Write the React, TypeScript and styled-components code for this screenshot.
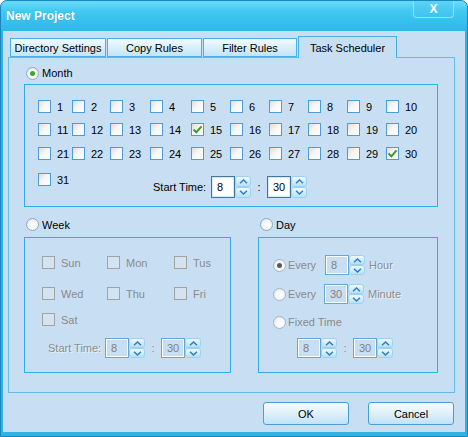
import React from 'react'
import styled, { createGlobalStyle } from 'styled-components'

const GlobalStyle = createGlobalStyle`
  html, body {
    margin: 0;
    padding: 0;
    background: #ffffff;
  }
  body {
    font-family: 'Liberation Sans', Arial, sans-serif;
    font-size: 11px;
    color: #000;
  }
`

const Window = styled.div`
  width: 468px;
  height: 437px;
  box-sizing: border-box;
  display: flex;
  flex-direction: column;
  background: #2fb3e4;
  border: 1px solid #1a86bd;
  border-radius: 7px 7px 0 0;
  overflow: hidden;
`

const TitleBar = styled.div`
  height: 30px;
  flex: none;
  display: flex;
  align-items: flex-start;
  background: linear-gradient(180deg, #6adcf7 0%, #41c8f1 35%, #2db8e8 100%);
`

const Title = styled.div`
  padding-left: 5px;
  line-height: 30px;
  font-size: 12px;
  font-weight: bold;
  color: #ffffff;
  text-shadow: 0 0 1px rgba(0, 90, 140, 0.4);
`

const CloseButton = styled.div`
  margin-left: auto;
  margin-right: 13px;
  margin-top: -1px;
  width: 41px;
  height: 18px;
  box-sizing: border-box;
  border: 1px solid #8fe2f8;
  border-top: none;
  border-radius: 0 0 4px 4px;
  background: linear-gradient(180deg, #5fd3f4 0%, #3dc2ee 100%);
  color: #ffffff;
  font-weight: bold;
  font-size: 12px;
  display: flex;
  align-items: center;
  justify-content: center;
`

const Body = styled.div`
  flex: 1;
  margin: 0 2px 4px 2px;
  background: #c8dff3;
  display: flex;
  flex-direction: column;
  padding: 5px 10px 0 5px;
`

const TabRow = styled.div`
  height: 21px;
  display: flex;
  align-items: flex-end;
  gap: 1px;
  padding-left: 2px;
`

const Tab = styled.div<{ $active?: boolean; $w: number }>`
  width: ${p => p.$w}px;
  height: ${p => (p.$active ? 22 : 19)}px;
  box-sizing: border-box;
  border: 1px solid #4ab1e6;
  border-bottom: ${p => (p.$active ? 'none' : '1px solid #4ab1e6')};
  background: ${p => (p.$active ? '#c8dff3' : 'linear-gradient(180deg, #f3fbff 0%, #d9effb 50%, #c4e4f6 100%)')};
  margin-bottom: ${p => (p.$active ? -1 : 0)}px;
  position: relative;
  z-index: ${p => (p.$active ? 1 : 0)};
  display: flex;
  align-items: center;
  justify-content: center;
  padding-top: ${p => (p.$active ? 1 : 0)}px;
  font-size: 11px;
`

const Panel = styled.div`
  height: 336px;
  box-sizing: border-box;
  border: 1px solid #62bce8;
  padding: 7px 0 0 15px;
  display: flex;
  flex-direction: column;
`

const Header = styled.div<{ $h: number }>`
  height: ${p => p.$h}px;
  display: flex;
  align-items: center;
  gap: 3px;
  padding-left: 2px;
`

const GroupBox = styled.div<{ $w: number; $h: number }>`
  width: ${p => p.$w}px;
  height: ${p => p.$h}px;
  box-sizing: border-box;
  border: 1px solid #36ace6;
`

const MonthBox = styled(GroupBox)`
  margin-top: 3px;
  padding: 15px 0 0 13px;
`

const MonthGrid = styled.div`
  display: grid;
  grid-template-columns: 34px 38px 40px 41px 39px 39px 39px 39px 39px auto;
  grid-template-rows: 23px 24px 26px auto;
  align-items: start;
`

const LowerRow = styled.div`
  display: flex;
  gap: 27px;
  margin-top: 9px;
`

const Column = styled.div`
  display: flex;
  flex-direction: column;
`

const WeekBox = styled(GroupBox)`
  margin-top: 4px;
  padding: 18px 0 0 17px;
`

const WeekGrid = styled.div`
  display: grid;
  grid-template-columns: 65px 67px auto;
  grid-template-rows: 31px 26px auto;
  align-items: start;
`

const DayBox = styled(GroupBox)`
  margin-top: 4px;
  padding: 17px 0 0 14px;
  display: flex;
  flex-direction: column;
`

const CheckItem = styled.label<{ $disabled?: boolean }>`
  display: flex;
  align-items: center;
  gap: 6px;
  height: 13px;
  color: ${p => (p.$disabled ? '#8a8a8a' : '#000')};
  white-space: nowrap;
`

const CheckBox = styled.span<{ $disabled?: boolean }>`
  width: 13px;
  height: 13px;
  box-sizing: border-box;
  flex: none;
  border: 1px solid ${p => (p.$disabled ? '#a2a2a2' : '#4a9dd7')};
  background: ${p =>
    p.$disabled ? '#d4e3f0' : 'linear-gradient(135deg, #dcdcdc 0%, #f6f6f6 45%, #ffffff 100%)'};
  display: flex;
  align-items: center;
  justify-content: center;
`

const RadioCircle = styled.span<{ $disabled?: boolean; $dot?: string }>`
  width: 13px;
  height: 13px;
  flex: none;
  box-sizing: border-box;
  border-radius: 50%;
  border: 1px solid ${p => (p.$disabled ? '#aab4be' : '#8ea8c4')};
  background: radial-gradient(circle at 60% 60%, #ffffff 0%, #f2f4f6 55%, #d6dde5 100%);
  display: flex;
  align-items: center;
  justify-content: center;
  &::after {
    content: '';
    width: 5px;
    height: 5px;
    border-radius: 50%;
    background: ${p => p.$dot ?? 'transparent'};
  }
`

const RadioLabel = styled.span<{ $disabled?: boolean }>`
  color: ${p => (p.$disabled ? '#8a8a8a' : '#000')};
  white-space: nowrap;
`

const TimeRow = styled.div<{ $indent?: number; $top?: number }>`
  display: flex;
  align-items: center;
  margin-left: ${p => p.$indent ?? 0}px;
  margin-top: ${p => p.$top ?? 0}px;
`

const TimeLabel = styled.span<{ $disabled?: boolean; $w?: number }>`
  width: ${p => (p.$w ? `${p.$w}px` : 'auto')};
  color: ${p => (p.$disabled ? '#8c8c8c' : '#000')};
  text-shadow: ${p => (p.$disabled ? '1px 1px 0 rgba(255,255,255,0.6)' : 'none')};
  white-space: nowrap;
`

const Colon = styled.span<{ $disabled?: boolean }>`
  width: 16px;
  text-align: center;
  color: ${p => (p.$disabled ? '#8c8c8c' : '#000')};
`

const NumInput = styled.div<{ $disabled?: boolean; $h: number }>`
  width: 24px;
  height: ${p => p.$h}px;
  box-sizing: border-box;
  border: 1px solid ${p => (p.$disabled ? '#6aa6d2' : '#3f76a3')};
  box-shadow: inset 0 0 0 1px ${p => (p.$disabled ? '#ffffff' : '#d7e9f6')};
  background: ${p => (p.$disabled ? '#c8dff3' : '#ffffff')};
  color: ${p => (p.$disabled ? '#7f7f7f' : '#000')};
  padding-left: 5px;
  display: flex;
  align-items: center;
`

const Spinner = styled.div<{ $h: number }>`
  width: 16px;
  height: ${p => p.$h}px;
  display: flex;
  flex-direction: column;
`

const SpinButton = styled.div`
  flex: 1;
  box-sizing: border-box;
  border: 1px solid #9dd2ef;
  border-radius: 3px;
  background: linear-gradient(180deg, #f0f9fe 0%, #d3ecfa 50%, #b9e1f7 100%);
  display: flex;
  align-items: center;
  justify-content: center;
`

const DayRow = styled.div<{ $top?: number }>`
  display: flex;
  align-items: center;
  margin-top: ${p => p.$top ?? 0}px;
`

const DayRadio = styled.div<{ $w?: number }>`
  display: flex;
  align-items: center;
  gap: 2px;
  width: ${p => (p.$w ? `${p.$w}px` : 'auto')};
  height: 16px;
`

const Unit = styled.span`
  margin-left: 4px;
  color: #8c8c8c;
  text-shadow: 1px 1px 0 rgba(255, 255, 255, 0.6);
`

const ButtonRow = styled.div`
  display: flex;
  justify-content: flex-end;
  gap: 19px;
  margin-top: 9px;
  padding-right: 1px;
`

const DialogButton = styled.button`
  width: 86px;
  height: 23px;
  box-sizing: border-box;
  border: 1px solid #4a9ed8;
  border-radius: 3px;
  background: linear-gradient(180deg, #f5fbff 0%, #e1f1fb 45%, #c2e2f6 100%);
  font-family: 'Liberation Sans', Arial, sans-serif;
  font-size: 11px;
  color: #000;
  padding: 0;
`

const Check = () => (
  <svg width="11" height="11" viewBox="0 0 11 11">
    <path d="M1.5 5.5 L4.3 8.3 L9.5 2.3" fill="none" stroke="#3f9a1f" strokeWidth="2" />
  </svg>
)

const Chevron = ({ up }: { up?: boolean }) => (
  <svg width="9" height="5" viewBox="0 0 9 5">
    <path
      d={up ? 'M1 4.2 L4.5 1 L8 4.2' : 'M1 0.8 L4.5 4 L8 0.8'}
      fill="none"
      stroke="#2f7fc4"
      strokeWidth="1.5"
    />
  </svg>
)

const Spin = ({ value, h, disabled }: { value: string; h: number; disabled?: boolean }) => (
  <>
    <NumInput $h={h} $disabled={disabled}>{value}</NumInput>
    <Spinner $h={h}>
      <SpinButton><Chevron up /></SpinButton>
      <SpinButton><Chevron /></SpinButton>
    </Spinner>
  </>
)

const Item = ({ label, checked, disabled }: { label: string; checked?: boolean; disabled?: boolean }) => (
  <CheckItem $disabled={disabled}>
    <CheckBox $disabled={disabled}>{checked && <Check />}</CheckBox>
    {label}
  </CheckItem>
)

const monthDays = Array.from({ length: 31 }, (_, i) => i + 1)
const weekDays = ['Sun', 'Mon', 'Tus', 'Wed', 'Thu', 'Fri', 'Sat']
const tabs = [
  { name: 'Directory Settings', w: 96 },
  { name: 'Copy Rules', w: 95 },
  { name: 'Filter Rules', w: 94 },
  { name: 'Task Scheduler', w: 99, active: true },
]

const App: React.FC = () => {
  return (
    <>
      <GlobalStyle />
      <Window>
        <TitleBar>
          <Title>New Project</Title>
          <CloseButton>X</CloseButton>
        </TitleBar>
        <Body>
          <TabRow>
            {tabs.map(t => (
              <Tab key={t.name} $w={t.w} $active={t.active}>{t.name}</Tab>
            ))}
          </TabRow>
          <Panel>
            <Header $h={16}>
              <RadioCircle $dot="#3aa532" />
              <RadioLabel>Month</RadioLabel>
            </Header>
            <MonthBox $w={414} $h={123}>
              <MonthGrid>
                {monthDays.map(d => (
                  <Item key={d} label={String(d)} checked={d === 15 || d === 30} />
                ))}
                <TimeRow $indent={3} $top={3} style={{ gridColumn: '4 / -1' }}>
                  <TimeLabel $w={58}>Start Time:</TimeLabel>
                  <Spin value="8" h={22} />
                  <Colon>:</Colon>
                  <Spin value="30" h={22} />
                </TimeRow>
              </MonthGrid>
            </MonthBox>
            <LowerRow>
              <Column>
                <Header $h={17}>
                  <RadioCircle />
                  <RadioLabel>Week</RadioLabel>
                </Header>
                <WeekBox $w={207} $h={136}>
                  <WeekGrid>
                    {weekDays.map(d => (
                      <Item key={d} label={d} disabled />
                    ))}
                  </WeekGrid>
                  <TimeRow $indent={6} $top={12}>
                    <TimeLabel $disabled $w={57}>Start Time:</TimeLabel>
                    <Spin value="8" h={20} disabled />
                    <Colon $disabled>:</Colon>
                    <Spin value="30" h={20} disabled />
                  </TimeRow>
                </WeekBox>
              </Column>
              <Column>
                <Header $h={17}>
                  <RadioCircle />
                  <RadioLabel>Day</RadioLabel>
                </Header>
                <DayBox $w={180} $h={136}>
                  <DayRow>
                    <DayRadio $w={52}>
                      <RadioCircle $disabled $dot="#5a5a5a" />
                      <RadioLabel $disabled>Every</RadioLabel>
                    </DayRadio>
                    <Spin value="8" h={20} disabled />
                    <Unit>Hour</Unit>
                  </DayRow>
                  <DayRow $top={9}>
                    <DayRadio $w={51}>
                      <RadioCircle $disabled />
                      <RadioLabel $disabled>Every</RadioLabel>
                    </DayRadio>
                    <Spin value="30" h={20} disabled />
                    <Unit>Minute</Unit>
                  </DayRow>
                  <DayRow $top={10}>
                    <DayRadio>
                      <RadioCircle $disabled />
                      <RadioLabel $disabled>Fixed Time</RadioLabel>
                    </DayRadio>
                  </DayRow>
                  <TimeRow $indent={24} $top={8}>
                    <Spin value="8" h={20} disabled />
                    <Colon $disabled>:</Colon>
                    <Spin value="30" h={20} disabled />
                  </TimeRow>
                </DayBox>
              </Column>
            </LowerRow>
          </Panel>
          <ButtonRow>
            <DialogButton>OK</DialogButton>
            <DialogButton>Cancel</DialogButton>
          </ButtonRow>
        </Body>
      </Window>
    </>
  )
}

export default App
